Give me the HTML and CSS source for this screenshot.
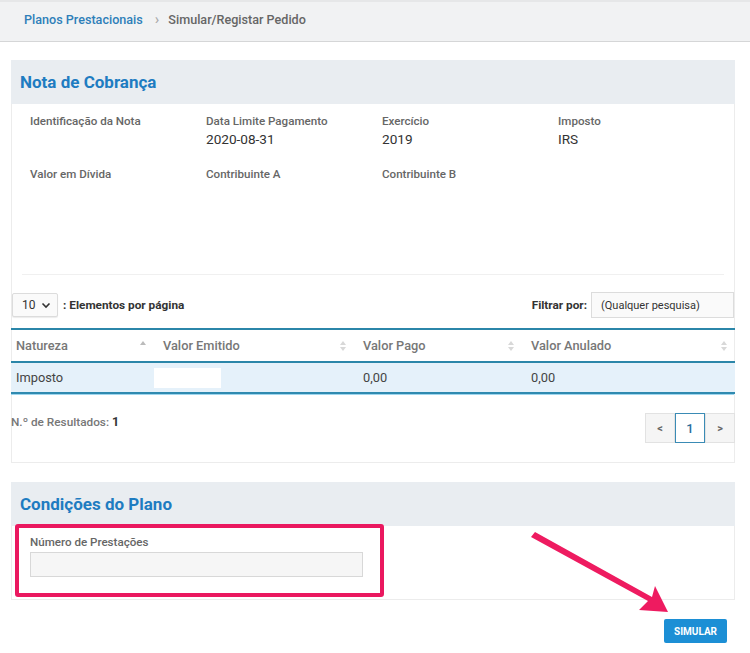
FILE: index.html
```html
<!DOCTYPE html>
<html lang="pt">
<head>
<meta charset="utf-8">
<title>Simular/Registar Pedido</title>
<link rel="stylesheet" href="styles.css">
</head>
<body>
<div class="breadcrumb">
  <a class="crumb-link">Planos Prestacionais</a>
  <span class="crumb-sep">&#8250;</span>
  <span class="crumb-current">Simular/Registar Pedido</span>
</div>

<div class="main">
  <section class="card">
    <div class="card-head"><h2>Nota de Cobrança</h2></div>
    <div class="fields">
      <div class="field"><div class="label">Identificação da Nota</div><div class="value"></div></div>
      <div class="field"><div class="label">Data Limite Pagamento</div><div class="value">2020-08-31</div></div>
      <div class="field"><div class="label">Exercício</div><div class="value">2019</div></div>
      <div class="field"><div class="label">Imposto</div><div class="value">IRS</div></div>
      <div class="field"><div class="label">Valor em Dívida</div><div class="value"></div></div>
      <div class="field"><div class="label">Contribuinte A</div><div class="value"></div></div>
      <div class="field"><div class="label">Contribuinte B</div><div class="value"></div></div>
    </div>
    <div class="table-area">
      <div class="controls">
        <div class="length">
          <div class="select">10 <svg width="10" height="7" viewBox="0 0 10 7"><path d="M1.5 1.5 L5 5 L8.5 1.5" fill="none" stroke="#333" stroke-width="1.6"/></svg></div>
          <span class="ctl-label">: Elementos por página</span>
        </div>
        <div class="filter">
          <span class="ctl-label">Filtrar por:</span>
          <div class="filter-input">(Qualquer pesquisa)</div>
        </div>
      </div>
      <table class="grid">
        <colgroup><col class="c1"><col class="c2"><col class="c3"><col class="c4"></colgroup>
        <thead>
          <tr>
            <th class="first"><span>Natureza</span><i class="sort asc"></i></th>
            <th><span>Valor Emitido</span><i class="sort"></i></th>
            <th><span>Valor Pago</span><i class="sort"></i></th>
            <th><span>Valor Anulado</span><i class="sort"></i></th>
          </tr>
        </thead>
        <tbody>
          <tr>
            <td class="first">Imposto</td>
            <td class="masked"><span class="mask"></span></td>
            <td>0,00</td>
            <td>0,00</td>
          </tr>
        </tbody>
      </table>
      <div class="table-foot">
        <div class="results">N.º de Resultados: <b>1</b></div>
        <div class="pager">
          <span class="pg">&lt;</span><span class="pg active">1</span><span class="pg">&gt;</span>
        </div>
      </div>
    </div>
  </section>

  <section class="card card2">
    <div class="card-head"><h2>Condições do Plano</h2></div>
    <div class="plan-body">
      <div class="label">Número de Prestações</div>
      <div class="text-input"></div>
    </div>
  </section>

  <div class="actions"><button class="btn">SIMULAR</button></div>
</div>

<div class="highlight"></div>
<svg class="arrow" width="750" height="653" viewBox="0 0 750 653">
  <path d="M531 537 L535 532 L652 597 L655 586 L668 612 L639 610 L648 601 Z" fill="#ee1b60"/>
</svg>
</body>
</html>
```
FILE: styles.css
```css
* { box-sizing: border-box; }
html, body { margin: 0; padding: 0; }
body {
  width: 750px;
  height: 653px;
  position: relative;
  overflow: hidden;
  background: #ffffff;
  font-family: Roboto, "Liberation Sans", Arial, sans-serif;
  color: #333;
}

.breadcrumb {
  height: 42px;
  background: #f1f2f3;
  border-top: 2px solid #e6e7e8;
  border-bottom: 1px solid #d5d6d7;
  display: flex;
  align-items: center;
  padding: 0 0 4px 24px;
  font-size: 12.6px;
  font-weight: 500;
}
.crumb-link { color: #2e7fb9; }
.crumb-sep { color: #aaa; margin: 0 9px 0 12px; font-size: 15px; line-height: 1; }
.crumb-current { color: #666; }

.main { padding: 18px 15px 0 11px; }

.card {
  border: 1px solid #ececec;
  background: #fff;
}
.card-head {
  height: 44px;
  background: #e9edf1;
  display: flex;
  align-items: center;
  padding-left: 9px;
  margin: -1px -1px 0 -1px;
}
.card-head h2 {
  margin: 0;
  font-size: 17px;
  font-weight: 700;
  color: #1e7cc1;
}

.fields {
  display: grid;
  grid-template-columns: repeat(4, 176px);
  grid-auto-rows: 37px;
  align-content: start;
  row-gap: 16px;
  padding: 10px 0 0 8px;
  height: 171px;
  border-bottom: 1px solid #f0f0f0;
  margin: 0 10px;
}
.label {
  font-size: 11.6px;
  font-weight: 500;
  color: #666;
  line-height: 14px;
}
.value {
  font-size: 13.6px;
  color: #333;
  line-height: 17px;
  margin-top: 3px;
}

.table-area { padding-top: 17px; }
.controls {
  display: flex;
  justify-content: space-between;
  align-items: center;
  height: 26px;
}
.length { display: flex; align-items: center; }
.select {
  width: 46px;
  height: 24px;
  border: 1px solid #dcdcdc;
  border-radius: 2px;
  background: #fafafa;
  box-shadow: 0 1px 1px rgba(0,0,0,0.08);
  display: flex;
  align-items: center;
  justify-content: space-between;
  padding: 0 6px 0 9px;
  font-size: 12px;
  color: #333;
}
.ctl-label { font-size: 11.8px; font-weight: 700; color: #333; margin-left: 5px; }
.filter { display: flex; align-items: center; }
.filter .ctl-label { margin: 0 4px 0 0; }
.filter-input {
  width: 143px;
  height: 26px;
  border: 1px solid #dcdcdc;
  background: #fafafa;
  font-size: 11px;
  color: #333;
  padding-left: 9px;
  display: flex;
  align-items: center;
}

.grid {
  width: 724px;
  margin: 10px 0 0 -1px;
  border-collapse: separate;
  border-spacing: 0;
  table-layout: fixed;
  font-size: 12.8px;
}
.c1 { width: 143px; }
.c2 { width: 200px; }
.c3 { width: 168px; }
.c4 { width: 213px; }
.grid th {
  height: 35px;
  text-align: left;
  font-weight: 500;
  color: #777;
  padding: 0 0 0 9px;
  position: relative;
  border-top: 2px solid #2b86a9;
  border-bottom: 2px solid #2b86a9;
}
.grid th.first, .grid td.first { padding-left: 5px; }
.sort {
  position: absolute;
  right: 7px;
  top: 11px;
  width: 7px;
  height: 10px;
}
.sort::before, .sort::after {
  content: "";
  position: absolute;
  left: 0;
  border-left: 3.5px solid transparent;
  border-right: 3.5px solid transparent;
}
.sort::before { top: 0; border-bottom: 4px solid #d8d8d8; }
.sort::after { bottom: 0; border-top: 4px solid #d8d8d8; }
.sort.asc::before { border-bottom-color: #bbb; }
.sort.asc::after { display: none; }

.grid td {
  height: 31px;
  padding: 0 0 0 9px;
  color: #444;
  background: #e5f1fa;
  border-bottom: 2px solid #2f8ab0;
}
.grid td.masked { padding-left: 0; }
.mask { display: block; width: 67px; height: 20px; background: #fff; }

.table-foot {
  display: flex;
  justify-content: space-between;
  align-items: flex-start;
  height: 68px;
  padding-top: 18px;
  margin-left: -1px;
  border-top: 1px solid #9fd6ee;
}
.results { font-size: 11.8px; font-weight: 500; color: #777; margin-top: 1px; }
.results b { font-size: 12.5px; color: #333; }
.pager { display: flex; margin-right: -1px; }
.pg {
  width: 30px;
  height: 30px;
  border: 1px solid #e2e2e2;
  background: #f5f5f5;
  display: flex;
  align-items: center;
  justify-content: center;
  font-size: 11px;
  font-weight: 700;
  color: #666;
}
.pg.active {
  background: #fff;
  border-color: #3a8bb5;
  color: #2a6e9c;
  font-size: 13px;
  font-weight: 500;
}

.card2 { margin-top: 19px; }
.plan-body { padding: 9px 0 23px 18px; height: 73px; }
.text-input {
  width: 333px;
  height: 25px;
  margin-top: 3px;
  border: 1px solid #d8d8d8;
  background: #f6f6f6;
}

.actions { display: flex; justify-content: flex-end; padding: 19px 8px 0 0; }
.btn {
  width: 63px;
  height: 24px;
  border: 0;
  border-radius: 2px;
  background: #1c8fd5;
  color: #fff;
  font-family: Roboto, "Liberation Sans", Arial, sans-serif;
  font-size: 10px;
  font-weight: 700;
  padding: 0;
}

.highlight {
  position: absolute;
  left: 15px;
  top: 524px;
  width: 369px;
  height: 73px;
  border: 4px solid #ea185f;
  border-radius: 3px;
}
.arrow { position: absolute; left: 0; top: 0; pointer-events: none; }
```
